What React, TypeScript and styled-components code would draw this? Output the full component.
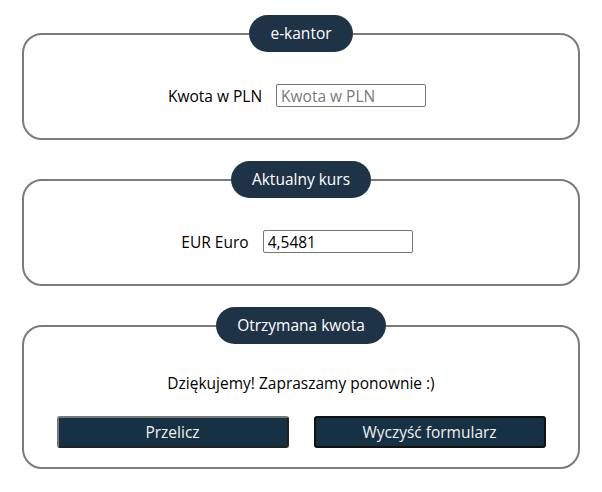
import React, { useState } from 'react';
import styled, { createGlobalStyle } from 'styled-components';

const GlobalStyle = createGlobalStyle`
  body {
    margin: 0;
    background: #ffffff;
    font-family: 'Open Sans', 'Noto Sans', sans-serif;
  }
`;

const App: React.FC = () => {
  const [amount, setAmount] = useState('');
  const [rate, setRate] = useState('4,5481');

  return (
    <Page>
      <GlobalStyle />
      <Box>
        <Legend>e-kantor</Legend>
        <Row>
          <Label htmlFor="pln">Kwota w PLN</Label>
          <Input
            id="pln"
            placeholder="Kwota w PLN"
            value={amount}
            onChange={(e) => setAmount(e.target.value)}
          />
        </Row>
      </Box>
      <Box>
        <Legend>Aktualny kurs</Legend>
        <Row>
          <Label htmlFor="eur">EUR Euro</Label>
          <Input id="eur" value={rate} onChange={(e) => setRate(e.target.value)} />
        </Row>
      </Box>
      <Box>
        <Legend>Otrzymana kwota</Legend>
        <Message>Dziękujemy! Zapraszamy ponownie :)</Message>
        <Buttons>
          <Button>Przelicz</Button>
          <Button dark>Wyczyść formularz</Button>
        </Buttons>
      </Box>
    </Page>
  );
};

const Page = styled.div`
  display: flex;
  flex-direction: column;
  gap: 21px;
  padding: 15px 22px 0;
`;

const Box = styled.fieldset`
  margin: 0;
  padding: 0;
  border: 2px solid #7b7b7b;
  border-radius: 20px;
  text-align: center;
`;

const Legend = styled.legend`
  margin: 0 auto;
  padding: 0 21px;
  height: 37px;
  line-height: 37px;
  border-radius: 19px;
  background: #1f3347;
  color: #ffffff;
  font-size: 15.5px;
`;

const Row = styled.div`
  display: flex;
  justify-content: center;
  align-items: center;
  gap: 14px;
  padding: 32px 8px 31px 0;
`;

const Label = styled.label`
  font-size: 15.5px;
  color: #000000;
`;

const Input = styled.input`
  box-sizing: border-box;
  width: 150px;
  height: 23px;
  padding: 0 4px;
  border: 1px solid #767676;
  border-radius: 2px;
  font-family: inherit;
  font-size: 15.5px;
  color: #000000;

  &::placeholder {
    color: #7a7a7a;
  }
`;

const Message = styled.p`
  margin: 0;
  padding: 29px 0 23px;
  font-size: 15.5px;
  line-height: 20px;
  color: #000000;
`;

const Buttons = styled.div`
  display: flex;
  justify-content: center;
  gap: 25px;
  padding: 0 0 19px;
`;

const Button = styled.button<{ dark?: boolean }>`
  box-sizing: border-box;
  width: 232px;
  height: 32px;
  border: 2px solid;
  border-color: ${({ dark }) => (dark ? '#111111' : '#777777 #222222 #222222 #777777')};
  border-radius: 3px;
  background: #173144;
  color: #f0f0f0;
  font-family: inherit;
  font-size: 15.5px;
  cursor: pointer;
`;

export default App;
